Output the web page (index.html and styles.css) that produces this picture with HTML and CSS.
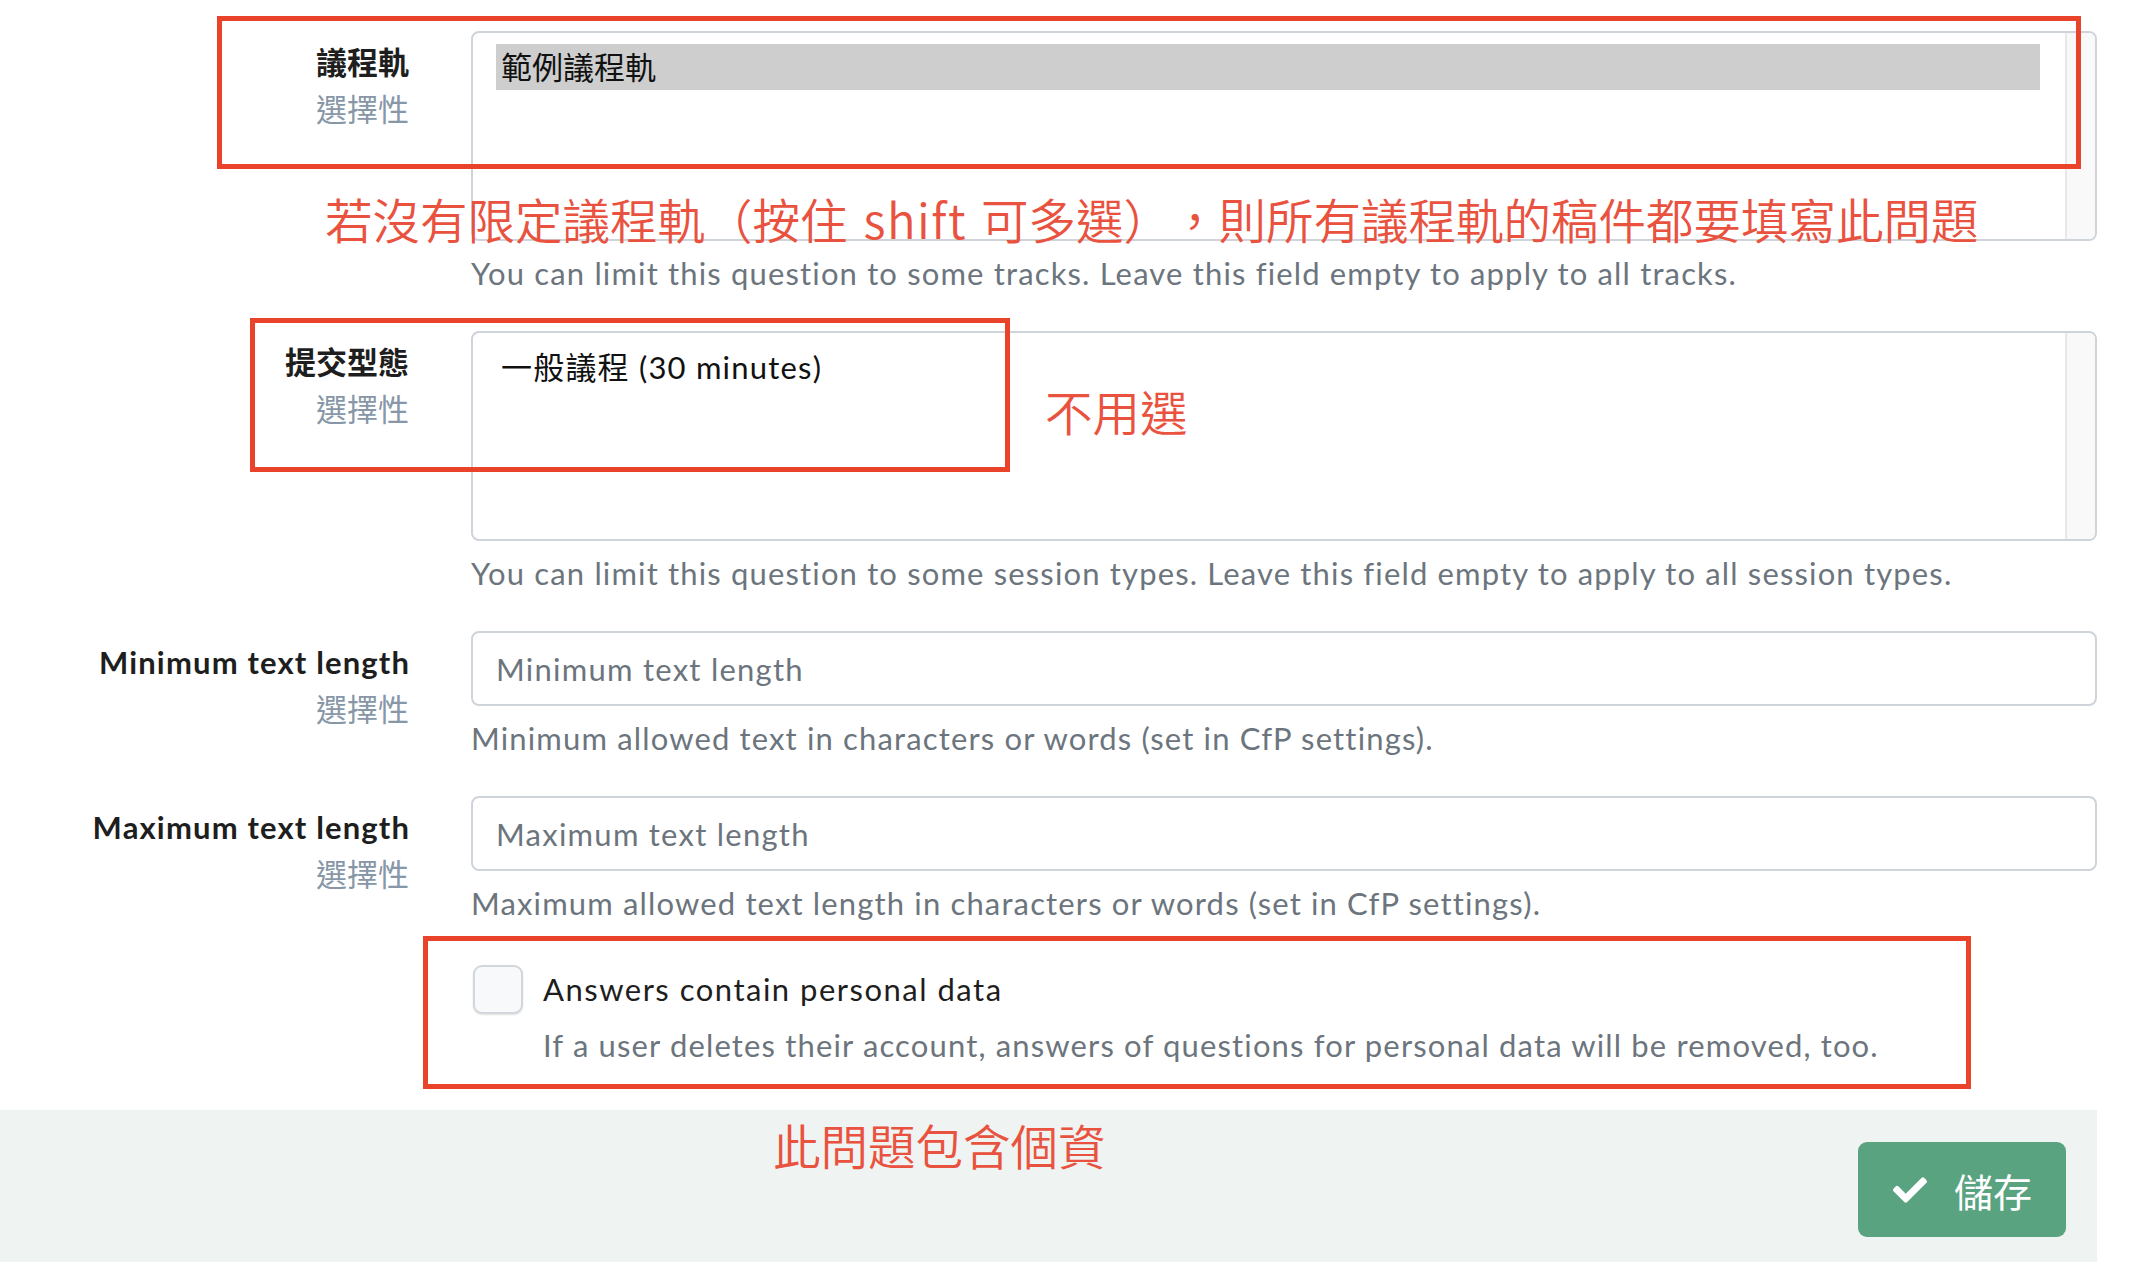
FILE: index.html
```
<!DOCTYPE html>
<html lang="zh-Hant">
<head>
<meta charset="utf-8">
<title>Question settings</title>
<link rel="stylesheet" href="styles.css">
</head>
<body>
<div class="page">
  <form class="form">
    <div class="row">
      <div class="label"><span class="name cjk">議程軌</span><span class="optional">選擇性</span></div>
      <div class="field">
        <div class="listbox">
          <div class="options"><div class="option selected cjk">範例議程軌</div></div>
          <div class="scrolltrack"></div>
        </div>
        <div class="help">You can limit this question to some tracks. Leave this field empty to apply to all tracks.</div>
      </div>
    </div>

    <div class="row">
      <div class="label"><span class="name cjk">提交型態</span><span class="optional">選擇性</span></div>
      <div class="field">
        <div class="listbox">
          <div class="options"><div class="option">一般議程 (30 minutes)</div></div>
          <div class="scrolltrack"></div>
        </div>
        <div class="help">You can limit this question to some session types. Leave this field empty to apply to all session types.</div>
      </div>
    </div>

    <div class="row">
      <div class="label"><span class="name">Minimum text length</span><span class="optional">選擇性</span></div>
      <div class="field">
        <div class="input">Minimum text length</div>
        <div class="help">Minimum allowed text in characters or words (set in CfP settings).</div>
      </div>
    </div>

    <div class="row">
      <div class="label"><span class="name">Maximum text length</span><span class="optional">選擇性</span></div>
      <div class="field">
        <div class="input">Maximum text length</div>
        <div class="help">Maximum allowed text length in characters or words (set in CfP settings).</div>
      </div>
    </div>

    <div class="row row-check">
      <div class="label"></div>
      <div class="field check">
        <span class="checkbox"></span>
        <div class="check-text">
          <div class="check-label">Answers contain personal data</div>
          <div class="help check-help">If a user deletes their account, answers of questions for personal data will be removed, too.</div>
        </div>
      </div>
    </div>
  </form>

  <div class="footer">
    <button class="save" type="button">
      <svg class="save-icon" viewBox="0 64 512 384" width="34" height="26" aria-hidden="true"><path fill="#fff" d="M173.898 439.404l-166.4-166.4c-9.997-9.997-9.997-26.206 0-36.204l36.203-36.204c9.997-9.998 26.207-9.998 36.204 0L192 312.69 432.095 72.596c9.997-9.997 26.207-9.997 36.204 0l36.203 36.204c9.997 9.997 9.997 26.206 0 36.204l-294.4 294.401c-9.998 9.997-26.207 9.997-36.204-.001z"/></svg>
      <span>儲存</span>
    </button>
  </div>

  <div class="mark mark-1"></div>
  <div class="mark mark-2"></div>
  <div class="mark mark-3"></div>
  <div class="note note-1">若沒有限定議程軌（按住<span class="note-latin">shift</span>可多選），則所有議程軌的稿件都要填寫此問題</div>
  <div class="note note-2">不用選</div>
  <div class="note note-3">此問題包含個資</div>
</div>
</body>
</html>
```

FILE: styles.css
```
html, body {
  margin: 0;
  padding: 0;
  background: #ffffff;
}

body {
  font-family: "Lato", "Noto Sans CJK TC", sans-serif;
  font-size: 31px;
  line-height: 46px;
  letter-spacing: 1.15px;
  color: #222222;
}

.cjk,
.optional {
  letter-spacing: 0;
}

.page {
  position: relative;
  width: 2097px;
  min-height: 1262px;
  display: flex;
  flex-direction: column;
}

.form {
  padding-top: 31px;
}

.row {
  display: grid;
  grid-template-columns: 409px 1626px;
  column-gap: 62px;
  margin-bottom: 35px;
}

.label {
  text-align: right;
  padding-top: 8px;
}

.name {
  display: block;
  font-weight: 700;
  color: #1e1e1e;
  margin-right: -1.2px;
}

.name.cjk {
  margin-right: 0;
}

.optional {
  display: block;
  color: #8797a8;
  margin-top: 1px;
}

.listbox {
  box-sizing: border-box;
  height: 210px;
  border: 2px solid #ced4da;
  border-radius: 8px;
  display: flex;
  overflow: hidden;
}

.options {
  flex: 1;
  padding: 11px 25px 0 23px;
}

.option {
  height: 46px;
  line-height: 46px;
  padding-left: 5px;
  color: #111111;
  letter-spacing: 1.2px;
}

.option.selected {
  background: #cecece;
  letter-spacing: 0;
}

.scrolltrack {
  width: 28px;
  background: #f9f9f9;
  border-left: 2px solid #e8e8e8;
}

.input {
  box-sizing: border-box;
  height: 75px;
  border: 2px solid #ced4da;
  border-radius: 8px;
  padding-left: 23px;
  display: flex;
  align-items: center;
  color: #6c757d;
  letter-spacing: 1.25px;
}

.help {
  margin-top: 9px;
  color: #6c757d;
}

.row-check {
  margin-top: 39px;
  margin-bottom: 42px;
}

.check {
  display: flex;
  align-items: flex-start;
  gap: 20px;
}

.checkbox {
  box-sizing: border-box;
  flex: none;
  width: 50px;
  height: 49px;
  margin-left: 2px;
  border: 2px solid #d3d7db;
  border-radius: 9px;
  background: #f8f9fa;
  box-shadow: 0 1px 2px rgba(0, 0, 0, 0.12);
}

.check-label {
  color: #1e1e1e;
  letter-spacing: 1.5px;
  margin-top: 1px;
}

.check-help {
  margin-top: 10px;
}

.footer {
  flex: 1;
  background: #eff3f1;
  padding: 32px 31px 32px 0;
  display: flex;
  justify-content: flex-end;
  align-items: flex-start;
}

.save {
  box-sizing: border-box;
  width: 208px;
  height: 95px;
  border: none;
  border-radius: 9px;
  background: #5aa381;
  color: #ffffff;
  font-family: "Lato", "Noto Sans CJK TC", sans-serif;
  font-size: 39px;
  letter-spacing: 0;
  display: flex;
  align-items: center;
  padding: 0 0 0 35px;
  gap: 27px;
}

.save-icon {
  display: block;
}

.mark {
  position: absolute;
  box-sizing: border-box;
  border: 5px solid #e9432b;
}

.mark-1 {
  left: 217px;
  top: 16px;
  width: 1864px;
  height: 153px;
}

.mark-2 {
  left: 250px;
  top: 318px;
  width: 760px;
  height: 154px;
}

.mark-3 {
  left: 423px;
  top: 936px;
  width: 1548px;
  height: 153px;
}

.note {
  position: absolute;
  font-family: "Noto Sans CJK TC", sans-serif;
  font-size: 47.5px;
  line-height: 47px;
  font-weight: 350;
  letter-spacing: 0;
  color: #e9523f;
  white-space: nowrap;
  text-spacing-trim: space-all;
}

.note-latin {
  letter-spacing: 1.5px;
  margin: 0 14px 0 16px;
}

.note-1 {
  left: 325px;
  top: 195px;
}

.note-2 {
  left: 1045px;
  top: 387px;
}

.note-3 {
  left: 773px;
  top: 1121px;
}
```
